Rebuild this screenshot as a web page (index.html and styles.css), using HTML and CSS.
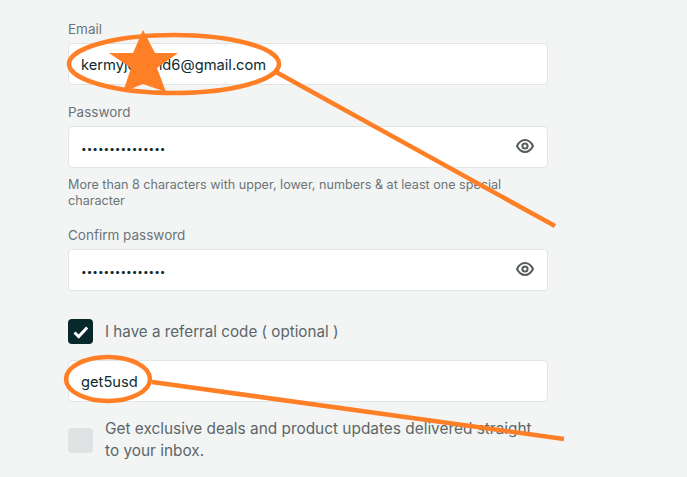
FILE: index.html
```html
<!DOCTYPE html>
<html lang="en">

<head>
  <meta charset="UTF-8">
  <meta name="viewport" content="width=device-width, initial-scale=1.0">
  <title>Sign up</title>
  <link rel="stylesheet" href="styles.css">
</head>

<body>
  <form class="form">
    <div class="field">
      <label class="label" for="email">Email</label>
      <div class="box"><input class="input" type="text" id="email" value="kermyjohnnd6@gmail.com"></div>
    </div>

    <div class="field">
      <label class="label" for="password">Password</label>
      <div class="box">
        <input class="input secret" type="password" id="password" value="abcdefghijklmno">
        <svg class="eye" viewBox="0 0 18 14" width="18" height="14">
          <path d="M1 7C3 3 5.500 1 9 1s6 2 8 6c-2 4-4.500 6-8 6s-6-2-8-6z" />
          <circle cx="9" cy="7" r="2.600" />
        </svg>
      </div>
      <p class="hint">More than 8 characters with upper, lower, numbers &amp; at least one special character</p>
    </div>

    <div class="field">
      <label class="label" for="confirm">Confirm password</label>
      <div class="box">
        <input class="input secret" type="password" id="confirm" value="abcdefghijklmno">
        <svg class="eye" viewBox="0 0 18 14" width="18" height="14">
          <path d="M1 7C3 3 5.500 1 9 1s6 2 8 6c-2 4-4.500 6-8 6s-6-2-8-6z" />
          <circle cx="9" cy="7" r="2.600" />
        </svg>
      </div>
    </div>

    <div class="check referral-check">
      <span class="tick on">
        <svg viewBox="0 0 16 16" width="16" height="16">
          <path d="M1.500 8.500l4.200 4 8.500-9" />
        </svg>
      </span>
      <span class="check-text">I have a referral code ( optional )</span>
    </div>

    <div class="box referral"><input class="input" type="text" value="get5usd"></div>

    <div class="check">
      <span class="tick"></span>
      <span class="check-text wide">Get exclusive deals and product updates delivered straight to your inbox.</span>
    </div>
  </form>

  <!-- marker scribbles drawn over the form -->
  <svg class="marks" viewBox="0 0 687 477" width="687" height="477">
    <ellipse cx="174" cy="64" rx="105" ry="29" />
    <path d="M276 72L555 226" />
    <ellipse cx="108" cy="379" rx="42" ry="22" />
    <path d="M152 382L564 439" />
    <polygon class="star" points="143,30 155,53 178,53 157,68 166,92 143,84 123,92 131,68 109,53 133,53" />
  </svg>
</body>

</html>
```

FILE: styles.css
```css
body {
  margin: 0;
  width: 687px;
  height: 477px;
  overflow: hidden;
  position: relative;
  background-color: #f3f5f5;
  font-family: 'Inter', 'Open Sans', sans-serif;
  color: #5c6668;
}

.form {
  width: 480px;
  margin-left: 68px;
  padding-top: 24px;
}

.field {
  margin-bottom: 22px;
}

.label {
  display: block;
  height: 19px;
  font-size: 13.500px;
  line-height: 11px;
  color: #6b7476;
}

.box {
  display: flex;
  align-items: center;
  height: 42px;
  box-sizing: border-box;
  padding: 0 12px;
  background: white;
  border: 1px solid #e2e5e5;
  border-radius: 4px;
}

.input {
  flex: 1;
  min-width: 0;
  padding: 2px 0 0;
  border: none;
  outline: none;
  background: transparent;
  font-family: inherit;
  font-size: 14.700px;
  color: #0e2a2e;
}

.secret {
  font-size: 10px;
}

.eye {
  margin-right: 1px;
  margin-bottom: 2px;
  fill: none;
  stroke: #555b5c;
  stroke-width: 2;
}

.hint {
  margin: 9px 0 0;
  font-size: 12.600px;
  line-height: 15.500px;
  color: #6b7476;
}

.check {
  display: flex;
  align-items: center;
  gap: 12px;
  font-size: 15.200px;
  line-height: 22px;
}

.referral-check {
  margin-top: 28px;
}

.check-text.wide {
  font-size: 15.400px;
}

.tick {
  flex: none;
  display: flex;
  align-items: center;
  justify-content: center;
  width: 25px;
  height: 25px;
  border-radius: 4px;
  background: #dfe3e3;
}

.tick.on {
  background: #07282a;
}

.tick svg {
  fill: none;
  stroke: white;
  stroke-width: 3;
}

.referral {
  margin: 16px 0;
}

.marks {
  position: absolute;
  left: 0;
  top: 0;
  fill: none;
  stroke: #ff7f27;
  stroke-width: 4.500;
}

.marks .star {
  fill: #ff7f27;
  stroke: none;
}
```
